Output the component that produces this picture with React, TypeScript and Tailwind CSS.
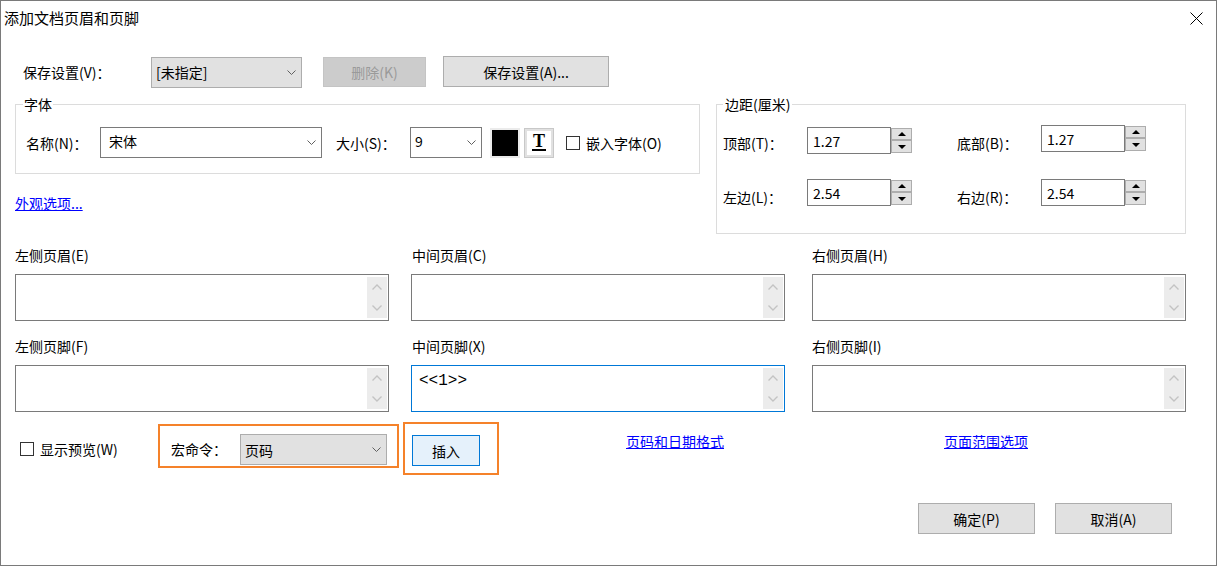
import React from 'react';

const Chevron = () => (
  <svg width="9" height="5" viewBox="0 0 9 5" className="shrink-0">
    <polyline points="0.5,0.5 4.5,4.5 8.5,0.5" fill="none" stroke="#606060" strokeWidth="1" />
  </svg>
);

const ScrollArrow = ({ up }: { up?: boolean }) => (
  <svg width="10" height="6" viewBox="0 0 10 6">
    <polyline
      points={up ? '0.5,5.5 5,1 9.5,5.5' : '0.5,0.5 5,5 9.5,0.5'}
      fill="none"
      stroke="#c3c3c3"
      strokeWidth="1.4"
    />
  </svg>
);

const Tri = ({ up }: { up?: boolean }) => (
  <svg width="8" height="4" viewBox="0 0 8 4">
    <polygon points={up ? '0,4 4,0 8,4' : '0,0 8,0 4,4'} fill="#000" />
  </svg>
);

const Checkbox = () => <span className="block w-[14px] h-[14px] shrink-0 border border-[#333] bg-white" />;

const Spin = () => (
  <div className="flex flex-col w-[21px] h-[27px] py-[1px]">
    <div className="h-[12px] border border-[#adadad] bg-[#e1e1e1] flex items-center justify-center">
      <Tri up />
    </div>
    <div className="h-[13px] border border-[#adadad] bg-[#e1e1e1] flex items-center justify-center">
      <Tri />
    </div>
  </div>
);

const NumField = ({ label, value, shift }: { label: string; value: string; shift?: boolean }) => (
  <div className={shift ? 'flex items-start -mt-[2px]' : 'flex items-start'}>
    <span className={shift ? 'w-[84px] mt-[8px]' : 'w-[84px] mt-[6px]'}>{label}</span>
    <div className="w-[84px] h-[27px] border border-[#7a7a7a] bg-white flex items-center pl-[5px]">{value}</div>
    <Spin />
  </div>
);

const TextBox = ({ active, children }: { active?: boolean; children?: React.ReactNode }) => (
  <div
    className={
      active
        ? 'w-[374px] h-[47px] flex border border-[#0078d7] bg-white'
        : 'w-[374px] h-[47px] flex border border-[#7a7a7a] bg-white'
    }
  >
    <div className="flex-1 pl-[7px] pt-[3px]">{children}</div>
    <div className="w-[20px] my-[2px] mr-[1px] bg-[#ececec] flex flex-col items-center justify-around">
      <ScrollArrow up />
      <ScrollArrow />
    </div>
  </div>
);

const Button = ({ w, children }: { w: string; children: React.ReactNode }) => (
  <div className={`${w} h-[31px] border border-[#adadad] bg-[#e1e1e1] flex items-center justify-center`}>{children}</div>
);

export default function App() {
  return (
    <div className="w-[1217px] h-[566px] border border-[#7a7a7a] bg-white text-[14px] leading-[20px] text-black font-['Noto_Sans_CJK_SC',sans-serif] flex flex-col">
      {/* title bar */}
      <div className="h-[34px] flex items-center justify-between pl-[3px] pr-[13px]">
        <span className="text-[15px]">添加文档页眉和页脚</span>
        <svg width="13" height="13" viewBox="0 0 13 13">
          <path d="M0.5 0.5 L12.5 12.5 M12.5 0.5 L0.5 12.5" stroke="#000" strokeWidth="1" />
        </svg>
      </div>

      {/* saved settings */}
      <div className="flex items-center h-[31px] mt-[21px] pl-[22px]">
        <span className="w-[128px]">保存设置(V)：</span>
        <div className="w-[151px] h-[31px] mt-[1px] border border-[#adadad] bg-[#e1e1e1] flex items-center justify-between pl-[4px] pr-[5px]">
          <span>[未指定]</span>
          <Chevron />
        </div>
        <div className="ml-[21px] w-[103px] h-[30px] border border-[#c4c4c4] bg-[#cccccc] text-[#9a9a9a] flex items-center justify-center">
          删除(K)
        </div>
        <div className="ml-[17px]">
          <Button w="w-[166px]">保存设置(A)...</Button>
        </div>
      </div>

      {/* font + margins */}
      <div className="flex items-start pl-[14px] mt-[7px]">
        <div className="w-[685px]">
          <fieldset className="border border-[#dcdcdc] pl-[10px] pt-[13px] pb-[15px] min-w-0">
            <legend className="-ml-[3px] px-[1px] leading-[20px]">字体</legend>
            <div className="flex items-center h-[31px]">
              <span className="w-[74px]">名称(N)：</span>
              <div className="w-[222px] h-[31px] border border-[#7a7a7a] bg-white flex items-start justify-between pl-[8px] pr-[5px] pt-[3px]">
                <span>宋体</span>
                <span className="mt-[9px]">
                  <Chevron />
                </span>
              </div>
              <span className="ml-[14px] w-[74px]">大小(S)：</span>
              <div className="w-[72px] h-[31px] border border-[#7a7a7a] bg-white flex items-start justify-between pl-[4px] pr-[5px] pt-[3px]">
                <span>9</span>
                <span className="mt-[9px]">
                  <Chevron />
                </span>
              </div>
              <span className="ml-[8px] w-[30px] h-[30px] border-2 border-[#ebebeb] bg-black" />
              <div className="ml-[4px] w-[30px] h-[30px] border border-[#c8c8c8] bg-[#e1e1e1] p-[2px]">
                <div className="w-full h-full bg-white flex items-center justify-center">
                  <span className="font-['Liberation_Serif',serif] font-bold text-[18px] leading-[15px] border-b-2 border-black px-[1px]">
                    T
                  </span>
                </div>
              </div>
              <span className="ml-[12px]">
                <Checkbox />
              </span>
              <span className="ml-[6px]">嵌入字体(O)</span>
            </div>
          </fieldset>
          <div className="mt-[19px]">
            <span className="text-[#0000ff] underline">外观选项...</span>
          </div>
        </div>

        <fieldset className="ml-[16px] w-[470px] border border-[#dcdcdc] pl-[6px] pt-[13px] pb-[25px] min-w-0">
          <legend className="px-[2px] leading-[20px]">边距(厘米)</legend>
          <div className="flex h-[27px]">
            <NumField label="顶部(T)：" value="1.27" />
            <div className="ml-[45px]">
              <NumField label="底部(B)：" value="1.27" shift />
            </div>
          </div>
          <div className="flex h-[27px] mt-[27px]">
            <NumField label="左边(L)：" value="2.54" shift />
            <div className="ml-[45px]">
              <NumField label="右边(R)：" value="2.54" shift />
            </div>
          </div>
        </fieldset>
      </div>

      {/* headers and footers */}
      <div className="pl-[14px] mt-[11px]">
        <div className="flex">
          <span className="w-[374px]">左侧页眉(E)</span>
          <span className="ml-[22px] w-[374px] pl-[1px]">中间页眉(C)</span>
          <span className="ml-[27px] w-[374px]">右侧页眉(H)</span>
        </div>
        <div className="flex mt-[9px]">
          <TextBox />
          <div className="ml-[22px]">
            <TextBox />
          </div>
          <div className="ml-[27px]">
            <TextBox />
          </div>
        </div>
        <div className="flex mt-[15px]">
          <span className="w-[374px]">左侧页脚(F)</span>
          <span className="ml-[22px] w-[374px] pl-[1px]">中间页脚(X)</span>
          <span className="ml-[27px] w-[374px]">右侧页脚(I)</span>
        </div>
        <div className="flex mt-[9px]">
          <TextBox />
          <div className="ml-[22px]">
            <TextBox active>
              <span className="font-['Liberation_Mono',monospace] text-[16px] leading-[20px]">&lt;&lt;1&gt;&gt;</span>
            </TextBox>
          </div>
          <div className="ml-[27px]">
            <TextBox />
          </div>
        </div>
      </div>

      {/* macro row */}
      <div className="flex items-start pl-[14px] mt-[10px]">
        <div className="w-[143px] flex items-center pl-[5px] mt-[17px]">
          <Checkbox />
          <span className="ml-[6px]">显示预览(W)</span>
        </div>
        <div className="mt-[2px] w-[241px] h-[44px] border-2 border-[#f5822a] flex items-start pl-[11px] pt-[8px]">
          <span className="w-[69px] mt-[5px]">宏命令：</span>
          <div className="w-[147px] h-[31px] border border-[#adadad] bg-[#e1e1e1] flex items-center justify-between pl-[4px] pr-[5px]">
            <span>页码</span>
            <Chevron />
          </div>
        </div>
        <div className="ml-[4px] w-[96px] h-[53px] border-2 border-[#f5822a] pl-[7px] pt-[11px]">
          <div className="w-[68px] h-[31px] border border-[#0078d7] bg-[#e5f1fb] flex items-center justify-center">插入</div>
        </div>
        <div className="ml-[127px] w-[318px] mt-[9px]">
          <span className="text-[#0000ff] underline">页码和日期格式</span>
        </div>
        <div className="mt-[9px]">
          <span className="text-[#0000ff] underline">页面范围选项</span>
        </div>
      </div>

      {/* dialog buttons */}
      <div className="flex justify-end gap-[20px] pr-[44px] mt-[28px]">
        <Button w="w-[117px]">确定(P)</Button>
        <Button w="w-[117px]">取消(A)</Button>
      </div>
    </div>
  );
}
